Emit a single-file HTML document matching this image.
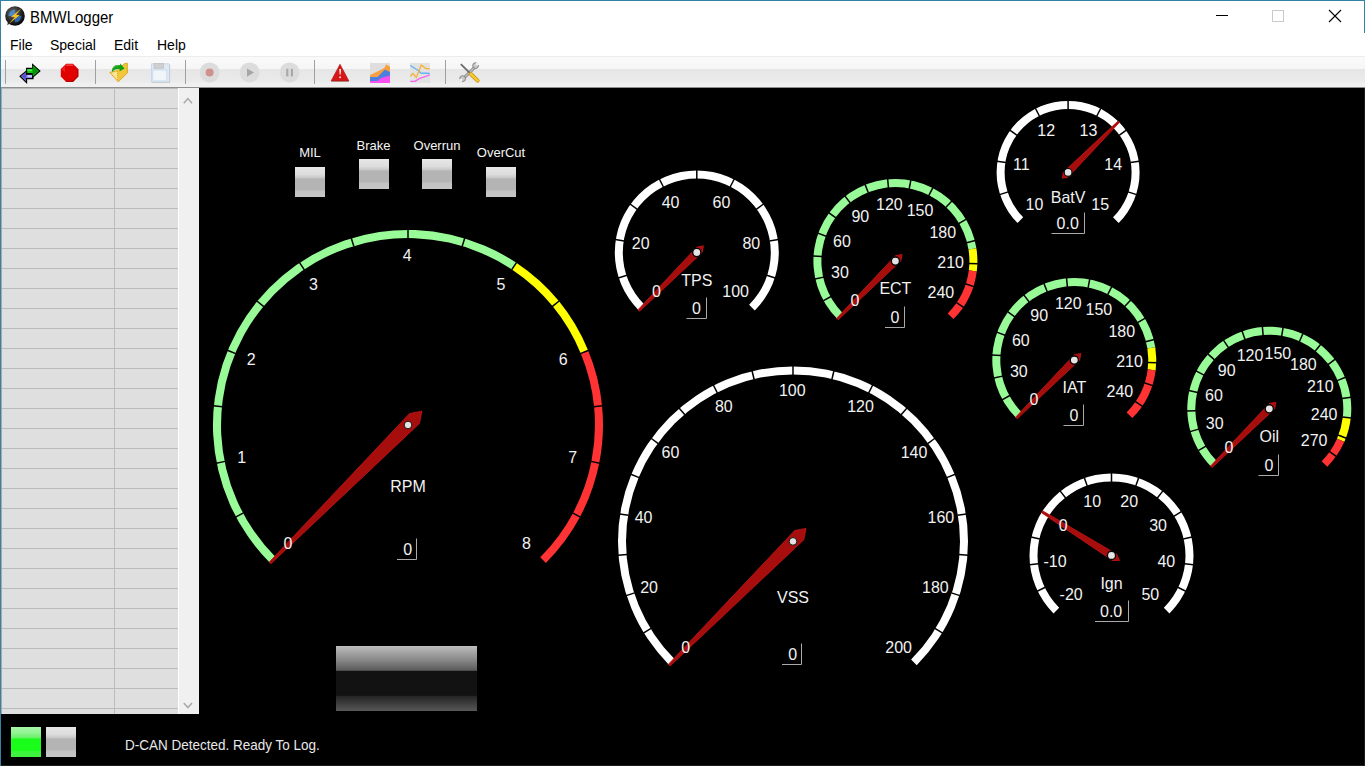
<!DOCTYPE html>
<html><head><meta charset="utf-8">
<style>
*{margin:0;padding:0;box-sizing:border-box}
html,body{width:1365px;height:766px;overflow:hidden;background:#fff;font-family:"Liberation Sans",sans-serif}
.abs{position:absolute}
#title{left:30px;top:7px;font-size:15px;color:#000;white-space:nowrap;transform:scaleY(1.12);transform-origin:0 0}
.menu{position:absolute;top:37px;font-size:14px;color:#000;white-space:nowrap}
#toolbar{left:1px;top:56px;width:1364px;height:32px;background:linear-gradient(#ececec 0,#ececec 1px,#fafafa 1px,#f6f6f6 13px,#e6e6e6 13px,#ebebeb 26px,#f0f0f0 27px,#f0f0f0 31px,#8e8e8e 31px)}
.sep{position:absolute;top:4px;width:1px;height:24px;background:#a0a0a0}
#grid{left:1px;top:88px;width:177px;height:626px;background:linear-gradient(#bababa 0,#bababa 1px,#dfdfdf 1px);background-size:177px 20px}
#scroll{left:178px;top:88px;width:21px;height:626px;background:#f0f0f0;border-left:1px solid #fff}
#panel{left:199px;top:88px;width:1166px;height:678px;background:#000}
#status{left:1px;top:714px;width:1364px;height:52px;background:#000}
.led{position:absolute;width:30px;height:30px;background:linear-gradient(#e8e8e8 0,#dcdcdc 25%,#cacaca 35%,#b4b4b4 40%,#b4b4b4 76%,#c2c2c2 80%,#c6c6c6 100%)}
.ledtxt{position:absolute;font-size:13px;color:#f4f4f4;white-space:nowrap;transform:translateX(-50%)}
svg text{font-family:"Liberation Sans",sans-serif;font-size:16px;fill:#f2f2f2;text-anchor:middle}
</style></head><body>
<div class="abs" style="left:0;top:0;width:1365px;height:1px;background:#3184a6"></div>
<div class="abs" style="left:0;top:0;width:1px;height:766px;background:#3184a6"></div>
<div class="abs" style="left:1364px;top:0;width:1px;height:33px;background:#3184a6"></div>
<svg class="abs" style="left:4px;top:5px" width="22" height="22" viewBox="0 0 22 22">
 <defs><radialGradient id="ic" cx="0.4" cy="0.35" r="0.7"><stop offset="0" stop-color="#707070"/><stop offset="0.6" stop-color="#262626"/><stop offset="1" stop-color="#000"/></radialGradient></defs>
 <path d="M3 20L5 15L8 18Z" fill="#333"/>
 <circle cx="11" cy="11" r="9.8" fill="url(#ic)"/>
 <path d="M11 4.5A6.5 6.5 0 0 0 4.5 11H11Z" fill="#4a88c8"/>
 <path d="M11 17.5A6.5 6.5 0 0 0 17.5 11H11Z" fill="#2c64b0"/>
 <path d="M17.5 3.5L7 11.8L10.8 12.2L4.5 19L15.8 10.2L12 9.8Z" fill="#f4c020"/>
</svg>
<div id="title" class="abs">BMWLogger</div>
<div class="abs" style="left:1216px;top:15px;width:12px;height:1px;background:#000"></div>
<div class="abs" style="left:1272px;top:10px;width:12px;height:12px;border:1px solid #cacaca"></div>
<svg class="abs" style="left:1328px;top:9px" width="14" height="14" viewBox="0 0 14 14"><path d="M1 1L13 13M13 1L1 13" stroke="#000" stroke-width="1.1"/></svg>
<div class="menu" style="left:10px">File</div>
<div class="menu" style="left:50px">Special</div>
<div class="menu" style="left:114px">Edit</div>
<div class="menu" style="left:157px">Help</div>
<div id="toolbar" class="abs">
 <div class="sep" style="left:4px"></div>
 <div class="sep" style="left:94px"></div>
 <div class="sep" style="left:184px"></div>
 <div class="sep" style="left:313px"></div>
 <div class="sep" style="left:444px"></div>
</div>
<svg class="abs" style="left:0;top:56px" width="500" height="32" viewBox="0 56 500 32">
 <!-- connect arrows -->
 <path d="M33 74.2H26.6V70.8L20 76.2L26.6 82.6V78.6H33Z" fill="#8070e8" stroke="#000" stroke-width="1.1" stroke-linejoin="miter"/>
 <path d="M22 76.2L26 72.8V80Z" fill="#4848c0" opacity="0.8"/>
 <path d="M27.5 75.2H32.2V77.2H27.5Z" fill="#c0d0ff"/>
 <path d="M26.6 68.4H32.6V64.4L39.9 71L32.6 77.4V73.6H26.6Z" fill="#14c814" stroke="#000" stroke-width="1.1" stroke-linejoin="miter"/>
 <path d="M32.6 65.6L38.6 71L32.6 76.2Z" fill="#0a900a"/>
 <path d="M27.4 69.4H32V71H27.4Z" fill="#40f040"/>
 <!-- stop -->
 <polygon points="66.2,63.7 72.9,63.7 78.3,69.1 78.3,76.4 72.9,81.9 66.2,81.9 60.8,76.4 60.8,69.1" fill="#e00000"/>
 <path d="M78.3 69.1V76.4L72.9 81.9H66.2L67 80.8H72.4L77.2 76V69.6Z" fill="#b40000"/>
 <path d="M66.6 64.6H72.4L73.6 65.8H65.6Z" fill="#ff7070" opacity="0.75"/>
 <path d="M61.6 69.4L65 66V72Z" fill="#ff4040" opacity="0.5"/>
 <!-- open folder -->
 <path d="M109.8 72.4L117.2 70.6L124.4 63.6L127.4 63.2V73L118.2 81.8Z" fill="#f2c838" stroke="#d89a18" stroke-width="0.8" stroke-linejoin="round"/>
 <path d="M111 73L117 71.6L117.6 80.2Z" fill="#f8e49a"/>
 <path d="M117.4 71L117.8 81" stroke="#d8a020" stroke-width="0.7" stroke-dasharray="1 1"/>
 <path d="M126.3 64.5V72.5" stroke="#b8d820" stroke-width="0.6" stroke-dasharray="1 1.2"/>
 <path d="M112 70C112.5 66 116 64.3 120 65.2L120.3 63.4L124.6 68.6L119.4 71.6L119.8 69.2C117 68.6 114.3 69.2 112 72Z" fill="#12a012"/>
 <path d="M113 68.5C114 66 116.5 65.5 118.5 65.8" stroke="#60c860" stroke-width="0.8" fill="none"/>
 <!-- save disabled -->
 <path d="M151.5 63.8H168.8L169.6 64.6V82.4H151.5Z" fill="#dfe9f4" stroke="#c6d8ec" stroke-width="1"/>
 <path d="M152 82.4H169.6V64.6" fill="none" stroke="#cacaca" stroke-width="0.9"/>
 <rect x="154" y="63.3" width="9.6" height="5" fill="#cfcfcf" stroke="#bdbdbd" stroke-width="0.6"/>
 <rect x="152.8" y="70" width="14" height="11" fill="#f2f5f8" stroke="#c8dcf0" stroke-width="0.9"/>
 <!-- record/play/pause disabled -->
 <circle cx="209.6" cy="72.4" r="10" fill="#dcdcdc"/>
 <circle cx="209.6" cy="72.4" r="4" fill="#d09090"/>
 <circle cx="249.6" cy="72.4" r="10" fill="#dcdcdc"/>
 <path d="M247 68.4L254 72.6L247 76.8Z" fill="#a6a6a6"/>
 <circle cx="289.6" cy="72.4" r="10" fill="#dcdcdc"/>
 <rect x="286.2" y="68.8" width="2.2" height="7.6" fill="#a8a8a8"/><rect x="290.8" y="68.8" width="2.2" height="7.6" fill="#a8a8a8"/>
 <!-- warning -->
 <path d="M340 64.2L348.9 81H331.1Z" fill="#d81818" stroke="#a01010" stroke-width="0.6"/>
 <path d="M331.5 81H348.5V81.6H331.5Z" fill="#907060"/>
 <path d="M339.3 69H341L340.6 74.5H339.7Z" fill="#fff"/><rect x="339.3" y="76.5" width="1.6" height="1.6" fill="#fff"/>
 <!-- area chart -->
 <rect x="370" y="63" width="20" height="20" fill="#dedede"/>
 <path d="M370 74.9L377.5 71.5L384.4 68L386 64.5L390 66.5V83H370Z" fill="#f8a040"/>
 <path d="M370 77L377.5 77L384.9 69.5L390 72V83H370Z" fill="#4c80e0"/>
 <path d="M370 81L377.5 81L381 78L390 75.4V83H370Z" fill="#f850f0"/>
 <!-- line chart -->
 <rect x="410" y="63" width="20" height="20" fill="#e2e2e2"/>
 <path d="M410.3 65.5L415.8 69L418.3 70.5L420.8 73L429.8 73.5" fill="none" stroke="#60b0f8" stroke-width="1.3"/>
 <path d="M410.3 76.4L412.8 73.5L416.3 77.4L419.3 70L421.3 65L425.8 68.5L429.8 68.7" fill="none" stroke="#f8b030" stroke-width="1.3"/>
 <path d="M410.3 81.4L414.8 81.4L419.8 78.4L429.8 75" fill="none" stroke="#f860f0" stroke-width="1.3"/>
 <!-- tools -->
 <path d="M463 79L476 66" stroke="#7c7c7c" stroke-width="3"/>
 <path d="M463 79L476 66" stroke="#c4c4c4" stroke-width="1.4"/>
 <circle cx="475.6" cy="65.6" r="2.9" fill="#c8c8c8" stroke="#7a7a7a" stroke-width="0.9"/>
 <path d="M475.6 65.6L476.5 61.5L480 64.8Z" fill="#f2f2f2"/>
 <circle cx="462.6" cy="78.6" r="2.9" fill="#c8c8c8" stroke="#7a7a7a" stroke-width="0.9"/>
 <path d="M462.6 78.6L461.7 82.7L458.2 79.4Z" fill="#eeeeee"/>
 <path d="M460.8 64.2L470 73.2" stroke="#6a6a6a" stroke-width="1.8"/>
 <path d="M470.8 74L477.6 80.6" stroke="#c89010" stroke-width="4" stroke-linecap="round"/>
 <path d="M470.8 74L477.6 80.6" stroke="#f4c830" stroke-width="2.6" stroke-linecap="round"/>
</svg>
<div id="grid" class="abs"></div>
<div id="scroll" class="abs"></div>
<div id="panel" class="abs"></div>
<div id="status" class="abs"></div>
<div class="abs" style="left:114px;top:88px;width:1px;height:626px;background:#bdbdbd"></div>
<div class="abs" style="left:1px;top:88px;width:1px;height:626px;background:#a8a8a8"></div>
<svg class="abs" style="left:178px;top:88px" width="21" height="626" viewBox="0 0 21 626">
 <path d="M5.8 15.2L9.9 10.6L14 15.2" fill="none" stroke="#a8a8a8" stroke-width="1.5"/>
 <path d="M5.8 615L9.9 619.6L14 615" fill="none" stroke="#a8a8a8" stroke-width="1.5"/>
</svg>
<div class="led" style="left:295px;top:167px"></div>
<div class="led" style="left:358.5px;top:159px"></div>
<div class="led" style="left:422px;top:159px"></div>
<div class="led" style="left:486px;top:167px"></div>
<div class="ledtxt" style="left:310px;top:145px">MIL</div>
<div class="ledtxt" style="left:373.5px;top:138px">Brake</div>
<div class="ledtxt" style="left:437px;top:138px">Overrun</div>
<div class="ledtxt" style="left:501px;top:145px">OverCut</div>
<div class="abs" style="left:336px;top:646px;width:141px;height:65px;background:linear-gradient(#bebebe 0,#a4a4a4 10%,#8c8c8c 20%,#5a5a5a 37.5%,#121212 38.5%,#121212 76%,#242424 77%,#575757 100%)"></div>
<div class="abs" style="left:11px;top:727px;width:30px;height:30px;background:linear-gradient(#a8f8a8 0,#90f490 20%,#68f068 36%,#1afc1a 40%,#1afc1a 78%,#3cf43c 82%,#40f040 100%)"></div>
<div class="abs" style="left:46px;top:727px;width:30px;height:30px;background:linear-gradient(#e8e8e8 0,#dcdcdc 25%,#cacaca 35%,#b4b4b4 40%,#b4b4b4 76%,#c2c2c2 80%,#c6c6c6 100%)"></div>
<div class="abs" style="left:125px;top:736px;font-size:13.5px;color:#e8e8e8;white-space:nowrap;transform:scaleY(1.15);transform-origin:0 0">D-CAN Detected. Ready To Log.</div>
<div class="abs" style="left:1364px;top:88px;width:1px;height:678px;background:#1e1e1e"></div>
<div class="abs" style="left:1px;top:765px;width:1364px;height:1px;background:#1e1e1e"></div>
<svg class="abs" style="left:0;top:0" width="1365" height="766">
<path d="M270.11 562.89A195 195 0 0 1 516.34 262.86L511.89 269.52A187 187 0 0 0 275.77 557.23Z" fill="#98fb98"/>
<path d="M516.34 262.86A195 195 0 0 1 588.16 350.38L580.77 353.44A187 187 0 0 0 511.89 269.52Z" fill="#ffff00"/>
<path d="M588.16 350.38A195 195 0 0 1 545.89 562.89L540.23 557.23A187 187 0 0 0 580.77 353.44Z" fill="#ff3333"/>
<line x1="243.52" y1="512.92" x2="235.58" y2="517.16" stroke="#000" stroke-width="1.5"/>
<line x1="225.08" y1="461.38" x2="216.26" y2="463.14" stroke="#000" stroke-width="1.5"/>
<line x1="222.4" y1="406.72" x2="213.44" y2="405.84" stroke="#000" stroke-width="1.5"/>
<line x1="235.7" y1="353.63" x2="227.38" y2="350.19" stroke="#000" stroke-width="1.5"/>
<line x1="263.83" y1="306.69" x2="256.88" y2="300.98" stroke="#000" stroke-width="1.5"/>
<line x1="304.39" y1="269.93" x2="299.39" y2="262.45" stroke="#000" stroke-width="1.5"/>
<line x1="353.86" y1="246.53" x2="351.25" y2="237.92" stroke="#000" stroke-width="1.5"/>
<line x1="408" y1="238.5" x2="408" y2="229.5" stroke="#000" stroke-width="1.5"/>
<line x1="462.14" y1="246.53" x2="464.75" y2="237.92" stroke="#000" stroke-width="1.5"/>
<line x1="511.61" y1="269.93" x2="516.61" y2="262.45" stroke="#000" stroke-width="1.5"/>
<line x1="552.17" y1="306.69" x2="559.12" y2="300.98" stroke="#000" stroke-width="1.5"/>
<line x1="580.3" y1="353.63" x2="588.62" y2="350.19" stroke="#000" stroke-width="1.5"/>
<line x1="593.6" y1="406.72" x2="602.56" y2="405.84" stroke="#000" stroke-width="1.5"/>
<line x1="590.92" y1="461.38" x2="599.74" y2="463.14" stroke="#000" stroke-width="1.5"/>
<line x1="572.48" y1="512.92" x2="580.42" y2="517.16" stroke="#000" stroke-width="1.5"/>
<polygon points="269.27,562.04 409.56,413.54 421.86,411.14 419.46,423.44 270.96,563.73" fill="#a60e0e" stroke="#c81414" stroke-width="0.8"/>
<circle cx="408" cy="425" r="3.8" fill="#e4e4e4" stroke="#050505" stroke-width="0.9"/>
<text transform="matrix(1,0,0,1.07,287.84,549.29)">0</text>
<text transform="matrix(1,0,0,1.07,241.64,462.86)">1</text>
<text transform="matrix(1,0,0,1.07,251.25,365.33)">2</text>
<text transform="matrix(1,0,0,1.07,313.42,289.58)">3</text>
<text transform="matrix(1,0,0,1.07,407.2,261.13)">4</text>
<text transform="matrix(1,0,0,1.07,500.98,289.58)">5</text>
<text transform="matrix(1,0,0,1.07,563.15,365.33)">6</text>
<text transform="matrix(1,0,0,1.07,572.76,462.86)">7</text>
<text transform="matrix(1,0,0,1.07,526.56,549.29)">8</text>
<text transform="matrix(1,0,0,1.07,408,492.1)">RPM</text>
<text transform="matrix(1,0,0,1.07,407.6,555)">0</text>
<path d="M397 559.5H416.5V538.5" fill="none" stroke="#aaaaaa" stroke-width="1"/>
<path d="M669.26 665.14A175 175 0 1 1 916.74 665.14L911.09 659.49A167 167 0 1 0 674.91 659.49Z" fill="#ffffff"/>
<line x1="651.04" y1="628.4" x2="643.36" y2="633.1" stroke="#000" stroke-width="1.5"/>
<line x1="634.65" y1="592.85" x2="626.09" y2="595.63" stroke="#000" stroke-width="1.5"/>
<line x1="627.01" y1="554.46" x2="618.04" y2="555.17" stroke="#000" stroke-width="1.5"/>
<line x1="628.55" y1="515.35" x2="619.66" y2="513.95" stroke="#000" stroke-width="1.5"/>
<line x1="639.17" y1="477.68" x2="630.86" y2="474.24" stroke="#000" stroke-width="1.5"/>
<line x1="658.3" y1="443.53" x2="651.02" y2="438.24" stroke="#000" stroke-width="1.5"/>
<line x1="684.87" y1="414.79" x2="679.02" y2="407.95" stroke="#000" stroke-width="1.5"/>
<line x1="717.41" y1="393.05" x2="713.32" y2="385.03" stroke="#000" stroke-width="1.5"/>
<line x1="754.13" y1="379.5" x2="752.03" y2="370.75" stroke="#000" stroke-width="1.5"/>
<line x1="793" y1="374.9" x2="793" y2="365.9" stroke="#000" stroke-width="1.5"/>
<line x1="831.87" y1="379.5" x2="833.97" y2="370.75" stroke="#000" stroke-width="1.5"/>
<line x1="868.59" y1="393.05" x2="872.68" y2="385.03" stroke="#000" stroke-width="1.5"/>
<line x1="901.13" y1="414.79" x2="906.98" y2="407.95" stroke="#000" stroke-width="1.5"/>
<line x1="927.7" y1="443.53" x2="934.98" y2="438.24" stroke="#000" stroke-width="1.5"/>
<line x1="946.83" y1="477.68" x2="955.14" y2="474.24" stroke="#000" stroke-width="1.5"/>
<line x1="957.45" y1="515.35" x2="966.34" y2="513.95" stroke="#000" stroke-width="1.5"/>
<line x1="958.99" y1="554.46" x2="967.96" y2="555.17" stroke="#000" stroke-width="1.5"/>
<line x1="951.35" y1="592.85" x2="959.91" y2="595.63" stroke="#000" stroke-width="1.5"/>
<line x1="934.96" y1="628.4" x2="942.64" y2="633.1" stroke="#000" stroke-width="1.5"/>
<polygon points="668.41,664.3 794.63,530.58 806.01,528.39 803.82,539.77 670.1,665.99" fill="#a60e0e" stroke="#c81414" stroke-width="0.8"/>
<circle cx="793" cy="541.4" r="3.8" fill="#e4e4e4" stroke="#050505" stroke-width="0.9"/>
<text transform="matrix(1,0,0,1.07,685.78,652.75)">0</text>
<text transform="matrix(1,0,0,1.07,649.07,592.84)">20</text>
<text transform="matrix(1,0,0,1.07,643.55,522.79)">40</text>
<text transform="matrix(1,0,0,1.07,670.44,457.87)">60</text>
<text transform="matrix(1,0,0,1.07,723.87,412.23)">80</text>
<text transform="matrix(1,0,0,1.07,792.2,395.83)">100</text>
<text transform="matrix(1,0,0,1.07,860.53,412.23)">120</text>
<text transform="matrix(1,0,0,1.07,913.96,457.87)">140</text>
<text transform="matrix(1,0,0,1.07,940.85,522.79)">160</text>
<text transform="matrix(1,0,0,1.07,935.33,592.84)">180</text>
<text transform="matrix(1,0,0,1.07,898.62,652.75)">200</text>
<text transform="matrix(1,0,0,1.07,793,602.9)">VSS</text>
<text transform="matrix(1,0,0,1.07,792.6,660)">0</text>
<path d="M782 664.5H801.5V643.5" fill="none" stroke="#aaaaaa" stroke-width="1"/>
<path d="M638.82 310.48A82 82 0 1 1 754.78 310.48L749.13 304.83A74 74 0 1 0 644.47 304.83Z" fill="#ffffff"/>
<line x1="626.9" y1="275.21" x2="618.34" y2="277.99" stroke="#000" stroke-width="1.5"/>
<line x1="624.2" y1="241" x2="615.32" y2="239.59" stroke="#000" stroke-width="1.5"/>
<line x1="637.34" y1="209.3" x2="630.06" y2="204.01" stroke="#000" stroke-width="1.5"/>
<line x1="663.43" y1="187.01" x2="659.35" y2="178.99" stroke="#000" stroke-width="1.5"/>
<line x1="696.8" y1="179" x2="696.8" y2="170" stroke="#000" stroke-width="1.5"/>
<line x1="730.17" y1="187.01" x2="734.25" y2="178.99" stroke="#000" stroke-width="1.5"/>
<line x1="756.26" y1="209.3" x2="763.54" y2="204.01" stroke="#000" stroke-width="1.5"/>
<line x1="769.4" y1="241" x2="778.28" y2="239.59" stroke="#000" stroke-width="1.5"/>
<line x1="766.7" y1="275.21" x2="775.26" y2="277.99" stroke="#000" stroke-width="1.5"/>
<polygon points="638.04,309.7 696.8,247.13 703.45,245.85 702.17,252.5 639.6,311.26" fill="#a60e0e" stroke="#c81414" stroke-width="0.8"/>
<circle cx="696.8" cy="252.5" r="4.1" fill="#e4e4e4" stroke="#050505" stroke-width="1.4"/>
<text transform="matrix(1,0,0,1.07,656.4,297.03)">0</text>
<text transform="matrix(1,0,0,1.07,640.69,248.67)">20</text>
<text transform="matrix(1,0,0,1.07,670.58,207.53)">40</text>
<text transform="matrix(1,0,0,1.07,721.42,207.53)">60</text>
<text transform="matrix(1,0,0,1.07,751.31,248.67)">80</text>
<text transform="matrix(1,0,0,1.07,735.6,297.03)">100</text>
<text transform="matrix(1,0,0,1.07,696.8,285.6)">TPS</text>
<text transform="matrix(1,0,0,1.07,696.4,314)">0</text>
<path d="M686.5 318.5H706.5V297.5" fill="none" stroke="#aaaaaa" stroke-width="1"/>
<path d="M837.42 319.08A82 82 0 1 1 976.39 248.27L968.49 249.52A74 74 0 1 0 843.07 313.43Z" fill="#98fb98"/>
<path d="M976.39 248.27A82 82 0 0 1 976.75 271.38L968.82 270.37A74 74 0 0 0 968.49 249.52Z" fill="#ffff00"/>
<path d="M976.75 271.38A82 82 0 0 1 953.38 319.08L947.73 313.43A74 74 0 0 0 968.82 270.37Z" fill="#ff3333"/>
<line x1="830.99" y1="296.51" x2="823.1" y2="300.84" stroke="#000" stroke-width="1.5"/>
<line x1="823.67" y1="277.13" x2="814.89" y2="279.1" stroke="#000" stroke-width="1.5"/>
<line x1="822.05" y1="256.48" x2="813.06" y2="255.92" stroke="#000" stroke-width="1.5"/>
<line x1="826.25" y1="236.2" x2="817.78" y2="233.15" stroke="#000" stroke-width="1.5"/>
<line x1="835.94" y1="217.9" x2="828.66" y2="212.61" stroke="#000" stroke-width="1.5"/>
<line x1="850.35" y1="203.02" x2="844.84" y2="195.91" stroke="#000" stroke-width="1.5"/>
<line x1="868.34" y1="192.76" x2="865.03" y2="184.39" stroke="#000" stroke-width="1.5"/>
<line x1="888.48" y1="187.93" x2="887.64" y2="178.97" stroke="#000" stroke-width="1.5"/>
<line x1="909.17" y1="188.9" x2="910.86" y2="180.06" stroke="#000" stroke-width="1.5"/>
<line x1="928.77" y1="195.61" x2="932.85" y2="187.59" stroke="#000" stroke-width="1.5"/>
<line x1="945.71" y1="207.52" x2="951.88" y2="200.96" stroke="#000" stroke-width="1.5"/>
<line x1="958.66" y1="223.69" x2="966.41" y2="219.1" stroke="#000" stroke-width="1.5"/>
<line x1="966.59" y1="242.82" x2="975.31" y2="240.58" stroke="#000" stroke-width="1.5"/>
<line x1="968.86" y1="263.41" x2="977.86" y2="263.69" stroke="#000" stroke-width="1.5"/>
<line x1="965.3" y1="283.81" x2="973.86" y2="286.59" stroke="#000" stroke-width="1.5"/>
<line x1="956.19" y1="302.41" x2="963.63" y2="307.47" stroke="#000" stroke-width="1.5"/>
<polygon points="836.64,318.3 895.4,255.73 902.05,254.45 900.77,261.1 838.2,319.86" fill="#a60e0e" stroke="#c81414" stroke-width="0.8"/>
<circle cx="895.4" cy="261.1" r="4.1" fill="#e4e4e4" stroke="#050505" stroke-width="1.4"/>
<text transform="matrix(1,0,0,1.07,855,305.63)">0</text>
<text transform="matrix(1,0,0,1.07,839.95,278.25)">30</text>
<text transform="matrix(1,0,0,1.07,841.91,247.06)">60</text>
<text transform="matrix(1,0,0,1.07,860.28,221.78)">90</text>
<text transform="matrix(1,0,0,1.07,889.33,210.28)">120</text>
<text transform="matrix(1,0,0,1.07,920.02,216.13)">150</text>
<text transform="matrix(1,0,0,1.07,942.8,237.52)">180</text>
<text transform="matrix(1,0,0,1.07,950.57,267.79)">210</text>
<text transform="matrix(1,0,0,1.07,940.92,297.51)">240</text>
<text transform="matrix(1,0,0,1.07,895.4,294.2)">ECT</text>
<text transform="matrix(1,0,0,1.07,895,323)">0</text>
<path d="M885 327.5H904.5V306.5" fill="none" stroke="#aaaaaa" stroke-width="1"/>
<path d="M1017.54 222.96A71.5 71.5 0 1 1 1118.66 222.96L1113 217.3A63.5 63.5 0 1 0 1023.2 217.3Z" fill="#ffffff"/>
<line x1="1008.18" y1="191.87" x2="999.62" y2="194.65" stroke="#000" stroke-width="1.5"/>
<line x1="1005.88" y1="162.54" x2="996.99" y2="161.14" stroke="#000" stroke-width="1.5"/>
<line x1="1017.13" y1="135.37" x2="1009.85" y2="130.08" stroke="#000" stroke-width="1.5"/>
<line x1="1039.5" y1="116.27" x2="1035.41" y2="108.25" stroke="#000" stroke-width="1.5"/>
<line x1="1068.1" y1="109.4" x2="1068.1" y2="100.4" stroke="#000" stroke-width="1.5"/>
<line x1="1096.7" y1="116.27" x2="1100.79" y2="108.25" stroke="#000" stroke-width="1.5"/>
<line x1="1119.07" y1="135.37" x2="1126.35" y2="130.08" stroke="#000" stroke-width="1.5"/>
<line x1="1130.32" y1="162.54" x2="1139.21" y2="161.14" stroke="#000" stroke-width="1.5"/>
<line x1="1128.02" y1="191.87" x2="1136.58" y2="194.65" stroke="#000" stroke-width="1.5"/>
<polygon points="1119.35,122.53 1067.89,177.42 1062.37,178.13 1063.08,172.61 1117.93,121.12" fill="#a60e0e" stroke="#c81414" stroke-width="0.8"/>
<circle cx="1068.1" cy="172.4" r="3.9" fill="#e4e4e4" stroke="#050505" stroke-width="1.2"/>
<text transform="matrix(1,0,0,1.07,1034.42,210.21)">10</text>
<text transform="matrix(1,0,0,1.07,1021.37,170.06)">11</text>
<text transform="matrix(1,0,0,1.07,1046.19,135.9)">12</text>
<text transform="matrix(1,0,0,1.07,1088.41,135.9)">13</text>
<text transform="matrix(1,0,0,1.07,1113.23,170.06)">14</text>
<text transform="matrix(1,0,0,1.07,1100.18,210.21)">15</text>
<text transform="matrix(1,0,0,1.07,1068.1,203.3)">BatV</text>
<text transform="matrix(1,0,0,1.07,1067.7,229)">0.0</text>
<path d="M1051.5 233.5H1084.5V212.5" fill="none" stroke="#aaaaaa" stroke-width="1"/>
<path d="M1016.32 418.08A82 82 0 1 1 1155.29 347.27L1147.39 348.52A74 74 0 1 0 1021.97 412.43Z" fill="#98fb98"/>
<path d="M1155.29 347.27A82 82 0 0 1 1155.65 370.38L1147.72 369.37A74 74 0 0 0 1147.39 348.52Z" fill="#ffff00"/>
<path d="M1155.65 370.38A82 82 0 0 1 1132.28 418.08L1126.63 412.43A74 74 0 0 0 1147.72 369.37Z" fill="#ff3333"/>
<line x1="1009.89" y1="395.51" x2="1002" y2="399.84" stroke="#000" stroke-width="1.5"/>
<line x1="1002.57" y1="376.13" x2="993.79" y2="378.1" stroke="#000" stroke-width="1.5"/>
<line x1="1000.95" y1="355.48" x2="991.96" y2="354.92" stroke="#000" stroke-width="1.5"/>
<line x1="1005.15" y1="335.2" x2="996.68" y2="332.15" stroke="#000" stroke-width="1.5"/>
<line x1="1014.84" y1="316.9" x2="1007.56" y2="311.61" stroke="#000" stroke-width="1.5"/>
<line x1="1029.25" y1="302.02" x2="1023.74" y2="294.91" stroke="#000" stroke-width="1.5"/>
<line x1="1047.24" y1="291.76" x2="1043.93" y2="283.39" stroke="#000" stroke-width="1.5"/>
<line x1="1067.38" y1="286.93" x2="1066.54" y2="277.97" stroke="#000" stroke-width="1.5"/>
<line x1="1088.07" y1="287.9" x2="1089.76" y2="279.06" stroke="#000" stroke-width="1.5"/>
<line x1="1107.67" y1="294.61" x2="1111.75" y2="286.59" stroke="#000" stroke-width="1.5"/>
<line x1="1124.61" y1="306.52" x2="1130.78" y2="299.96" stroke="#000" stroke-width="1.5"/>
<line x1="1137.56" y1="322.69" x2="1145.31" y2="318.1" stroke="#000" stroke-width="1.5"/>
<line x1="1145.49" y1="341.82" x2="1154.21" y2="339.58" stroke="#000" stroke-width="1.5"/>
<line x1="1147.76" y1="362.41" x2="1156.76" y2="362.69" stroke="#000" stroke-width="1.5"/>
<line x1="1144.2" y1="382.81" x2="1152.76" y2="385.59" stroke="#000" stroke-width="1.5"/>
<line x1="1135.09" y1="401.41" x2="1142.53" y2="406.47" stroke="#000" stroke-width="1.5"/>
<polygon points="1015.54,417.3 1074.3,354.73 1080.95,353.45 1079.67,360.1 1017.1,418.86" fill="#a60e0e" stroke="#c81414" stroke-width="0.8"/>
<circle cx="1074.3" cy="360.1" r="4.1" fill="#e4e4e4" stroke="#050505" stroke-width="1.4"/>
<text transform="matrix(1,0,0,1.07,1033.9,404.63)">0</text>
<text transform="matrix(1,0,0,1.07,1018.85,377.25)">30</text>
<text transform="matrix(1,0,0,1.07,1020.81,346.06)">60</text>
<text transform="matrix(1,0,0,1.07,1039.18,320.78)">90</text>
<text transform="matrix(1,0,0,1.07,1068.23,309.28)">120</text>
<text transform="matrix(1,0,0,1.07,1098.92,315.13)">150</text>
<text transform="matrix(1,0,0,1.07,1121.7,336.52)">180</text>
<text transform="matrix(1,0,0,1.07,1129.47,366.79)">210</text>
<text transform="matrix(1,0,0,1.07,1119.82,396.51)">240</text>
<text transform="matrix(1,0,0,1.07,1074.3,393.2)">IAT</text>
<text transform="matrix(1,0,0,1.07,1073.9,421)">0</text>
<path d="M1063.5 425.5H1083.5V404.5" fill="none" stroke="#aaaaaa" stroke-width="1"/>
<path d="M1211.32 466.78A82 82 0 1 1 1350.78 417.98L1342.83 417.09A74 74 0 1 0 1216.97 461.13Z" fill="#98fb98"/>
<path d="M1350.78 417.98A82 82 0 0 1 1344.33 441.87L1337.01 438.65A74 74 0 0 0 1342.83 417.09Z" fill="#ffff00"/>
<path d="M1344.33 441.87A82 82 0 0 1 1327.28 466.78L1321.63 461.13A74 74 0 0 0 1337.01 438.65Z" fill="#ff3333"/>
<line x1="1205.99" y1="446.14" x2="1198.24" y2="450.72" stroke="#000" stroke-width="1.5"/>
<line x1="1198.67" y1="429.15" x2="1190.02" y2="431.64" stroke="#000" stroke-width="1.5"/>
<line x1="1195.83" y1="410.86" x2="1186.83" y2="411.11" stroke="#000" stroke-width="1.5"/>
<line x1="1197.64" y1="392.44" x2="1188.87" y2="390.44" stroke="#000" stroke-width="1.5"/>
<line x1="1204" y1="375.06" x2="1196" y2="370.93" stroke="#000" stroke-width="1.5"/>
<line x1="1214.5" y1="359.82" x2="1207.78" y2="353.83" stroke="#000" stroke-width="1.5"/>
<line x1="1228.47" y1="347.69" x2="1223.47" y2="340.2" stroke="#000" stroke-width="1.5"/>
<line x1="1245.02" y1="339.42" x2="1242.05" y2="330.93" stroke="#000" stroke-width="1.5"/>
<line x1="1263.12" y1="335.56" x2="1262.37" y2="326.59" stroke="#000" stroke-width="1.5"/>
<line x1="1281.61" y1="336.34" x2="1283.12" y2="327.47" stroke="#000" stroke-width="1.5"/>
<line x1="1299.32" y1="341.71" x2="1303" y2="333.5" stroke="#000" stroke-width="1.5"/>
<line x1="1315.13" y1="351.34" x2="1320.74" y2="344.3" stroke="#000" stroke-width="1.5"/>
<line x1="1328.03" y1="364.6" x2="1335.22" y2="359.19" stroke="#000" stroke-width="1.5"/>
<line x1="1337.21" y1="380.67" x2="1345.52" y2="377.23" stroke="#000" stroke-width="1.5"/>
<line x1="1342.08" y1="398.53" x2="1350.99" y2="397.27" stroke="#000" stroke-width="1.5"/>
<line x1="1342.34" y1="417.03" x2="1351.28" y2="418.04" stroke="#000" stroke-width="1.5"/>
<line x1="1337.97" y1="435.01" x2="1346.38" y2="438.22" stroke="#000" stroke-width="1.5"/>
<line x1="1329.24" y1="451.33" x2="1336.58" y2="456.54" stroke="#000" stroke-width="1.5"/>
<polygon points="1210.54,466 1269.3,403.43 1275.95,402.15 1274.67,408.8 1212.1,467.56" fill="#a60e0e" stroke="#c81414" stroke-width="0.8"/>
<circle cx="1269.3" cy="408.8" r="4.1" fill="#e4e4e4" stroke="#050505" stroke-width="1.4"/>
<text transform="matrix(1,0,0,1.07,1228.9,453.33)">0</text>
<text transform="matrix(1,0,0,1.07,1214.69,429.23)">30</text>
<text transform="matrix(1,0,0,1.07,1213.9,401.27)">60</text>
<text transform="matrix(1,0,0,1.07,1226.74,376.41)">90</text>
<text transform="matrix(1,0,0,1.07,1250,360.87)">120</text>
<text transform="matrix(1,0,0,1.07,1277.88,358.52)">150</text>
<text transform="matrix(1,0,0,1.07,1303.42,369.95)">180</text>
<text transform="matrix(1,0,0,1.07,1320.24,392.3)">210</text>
<text transform="matrix(1,0,0,1.07,1324.15,420)">240</text>
<text transform="matrix(1,0,0,1.07,1314.17,446.14)">270</text>
<text transform="matrix(1,0,0,1.07,1269.3,441.9)">Oil</text>
<text transform="matrix(1,0,0,1.07,1268.9,471)">0</text>
<path d="M1258.5 475.5H1278.5V454.5" fill="none" stroke="#aaaaaa" stroke-width="1"/>
<path d="M1053.52 613.38A82 82 0 1 1 1169.48 613.38L1163.83 607.73A74 74 0 1 0 1059.17 607.73Z" fill="#ffffff"/>
<line x1="1045.28" y1="587.29" x2="1037.17" y2="591.2" stroke="#000" stroke-width="1.5"/>
<line x1="1038.46" y1="563.63" x2="1029.52" y2="564.64" stroke="#000" stroke-width="1.5"/>
<line x1="1039.84" y1="539.04" x2="1031.07" y2="537.04" stroke="#000" stroke-width="1.5"/>
<line x1="1049.27" y1="516.3" x2="1041.65" y2="511.51" stroke="#000" stroke-width="1.5"/>
<line x1="1065.67" y1="497.94" x2="1060.06" y2="490.9" stroke="#000" stroke-width="1.5"/>
<line x1="1087.22" y1="486.02" x2="1084.25" y2="477.53" stroke="#000" stroke-width="1.5"/>
<line x1="1111.5" y1="481.9" x2="1111.5" y2="472.9" stroke="#000" stroke-width="1.5"/>
<line x1="1135.78" y1="486.02" x2="1138.75" y2="477.53" stroke="#000" stroke-width="1.5"/>
<line x1="1157.33" y1="497.94" x2="1162.94" y2="490.9" stroke="#000" stroke-width="1.5"/>
<line x1="1173.73" y1="516.3" x2="1181.35" y2="511.51" stroke="#000" stroke-width="1.5"/>
<line x1="1183.16" y1="539.04" x2="1191.93" y2="537.04" stroke="#000" stroke-width="1.5"/>
<line x1="1184.54" y1="563.63" x2="1193.48" y2="564.64" stroke="#000" stroke-width="1.5"/>
<line x1="1177.72" y1="587.29" x2="1185.83" y2="591.2" stroke="#000" stroke-width="1.5"/>
<polygon points="1042.65,510.84 1116.74,554.2 1119.46,560.4 1112.7,560.64 1041.48,512.7" fill="#a60e0e" stroke="#c81414" stroke-width="0.8"/>
<circle cx="1111.5" cy="555.4" r="4.1" fill="#e4e4e4" stroke="#050505" stroke-width="1.4"/>
<text transform="matrix(1,0,0,1.07,1071.1,599.93)">-20</text>
<text transform="matrix(1,0,0,1.07,1055.05,566.6)">-10</text>
<text transform="matrix(1,0,0,1.07,1063.28,530.54)">0</text>
<text transform="matrix(1,0,0,1.07,1092.2,507.47)">10</text>
<text transform="matrix(1,0,0,1.07,1129.2,507.47)">20</text>
<text transform="matrix(1,0,0,1.07,1158.12,530.54)">30</text>
<text transform="matrix(1,0,0,1.07,1166.35,566.6)">40</text>
<text transform="matrix(1,0,0,1.07,1150.3,599.93)">50</text>
<text transform="matrix(1,0,0,1.07,1111.5,589.3)">Ign</text>
<text transform="matrix(1,0,0,1.07,1111.1,617)">0.0</text>
<path d="M1095 621.5H1128.5V600.5" fill="none" stroke="#aaaaaa" stroke-width="1"/>
</svg>
</body></html>
